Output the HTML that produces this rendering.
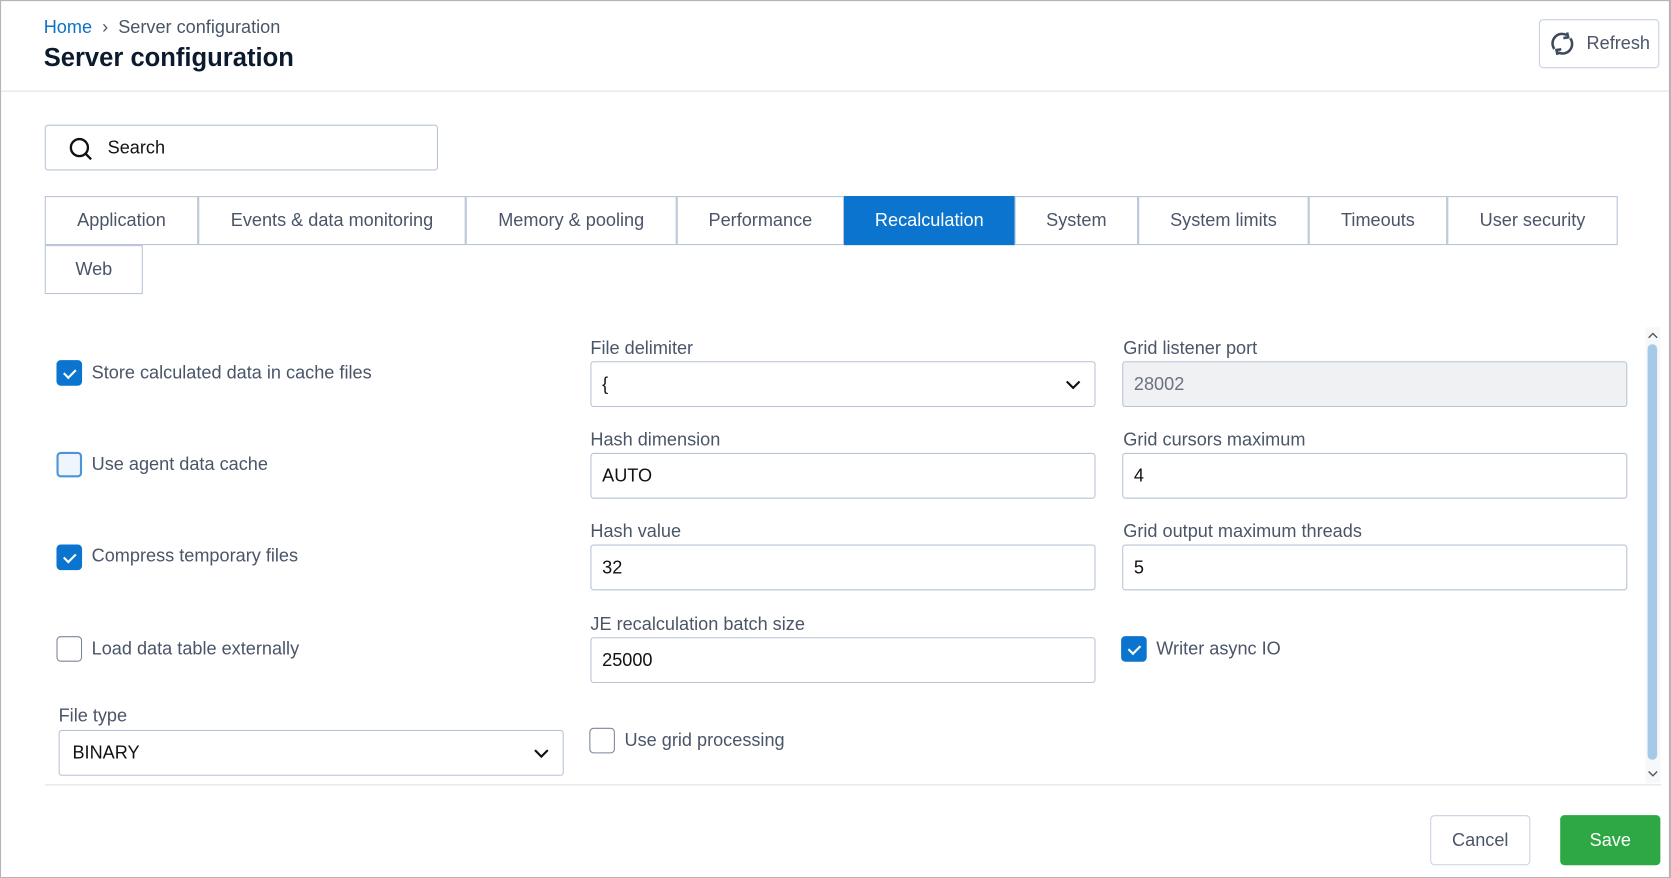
<!DOCTYPE html>
<html><head><meta charset="utf-8"><style>
*{box-sizing:border-box;margin:0;padding:0}
html,body{width:1671px;height:878px;overflow:hidden;background:#fff}
#w{position:absolute;left:0;top:0;width:1568px;height:824px;transform:scale(1.0657,1.0656);transform-origin:0 0;font-family:"Liberation Sans",sans-serif;color:#3d4a5c;font-size:17px;border:1px solid #b9b3b8;border-right-width:2px}
.a{position:absolute}
.crumb{left:40px;top:15px;font-size:17px;color:#4a5568}
.crumb span{color:#0b72c7}
h1{position:absolute;left:40px;top:40px;font-size:24px;font-weight:bold;color:#0c1a2e}
.hd{left:0;right:0;top:84px;border-top:1px solid #dde1ea}
.btn{border:1px solid #c8d2e0;border-radius:4px;background:#fff;display:flex;align-items:center;justify-content:center;font-size:17px;color:#4a5568}
.search{left:41px;top:116px;width:369px;height:43px;border:1px solid #b7c4d6;border-radius:3px;color:#111;font-size:17px}
.tab{top:183px;height:46px;border:1px solid #b7c4d6;display:flex;align-items:center;justify-content:center;color:#4a5568;font-size:17px;margin-left:-1px}
.tab.on{background:#0a74cf;border-color:#0a74cf;color:#fff}
.cb{width:24px;height:24px;border:1.5px solid #7a8699;border-radius:4px;background:#fff}
.cb.on{background:#0a74cf;border-color:#0a74cf}
.cb.on:after{content:"";position:absolute;left:8px;top:5px;width:5px;height:9px;border:solid #fff;border-width:0 2px 2px 0;transform:rotate(45deg)}
.lbl{font-size:17px;color:#4a5568}
.inp{height:43px;border:1px solid #b7c4d6;border-radius:3px;padding-left:10px;display:flex;align-items:center;color:#111;font-size:17px}
</style></head><body><div id="w">
<div class="a crumb"><span>Home</span>&nbsp;&nbsp;›&nbsp;&nbsp;Server configuration</div>
<h1>Server configuration</h1>
<div class="a btn" style="left:1443px;top:17px;width:113px;height:46px;gap:10px">
<svg width="26" height="26" viewBox="0 0 26 26" fill="none" stroke="#3d4a5c" stroke-width="2.4"><path d="M5.5 18A9 9 0 0 1 17 4.8"/><path d="M20.5 8A9 9 0 0 1 9 21.2"/><path d="M17.5 2.5l1 4.5-4.5 0.8" fill="none"/><path d="M8.5 23.5l-1-4.5 4.5-0.8" fill="none"/></svg>Refresh</div>
<div class="a hd"></div>
<div class="a search"><svg class="a" style="left:21px;top:10px" width="24" height="24" viewBox="0 0 24 24" fill="none" stroke="#111" stroke-width="2.2"><circle cx="10.5" cy="10.5" r="8"/><path d="M16.5 16.5l5 5"/></svg><span class="a" style="left:58px;top:11px">Search</span></div>
<div class="a tab" style="left:42px;width:144px">Application</div>
<div class="a tab" style="left:186px;width:251px">Events &amp; data monitoring</div>
<div class="a tab" style="left:437px;width:198px">Memory &amp; pooling</div>
<div class="a tab" style="left:635px;width:157px">Performance</div>
<div class="a tab on" style="left:792px;width:160px">Recalculation</div>
<div class="a tab" style="left:952px;width:116px">System</div>
<div class="a tab" style="left:1068px;width:160px">System limits</div>
<div class="a tab" style="left:1228px;width:130px">Timeouts</div>
<div class="a tab" style="left:1358px;width:160px">User security</div>
<div class="a tab" style="left:42px;top:229px;width:92px">Web</div>

<div class="a cb on" style="left:52px;top:337px"></div><div class="a lbl" style="left:85px;top:339px">Store calculated data in cache files</div>
<div class="a cb" style="left:52px;top:423px;border-color:#4b95d6;background:#eef5fd;border-width:2px"></div><div class="a lbl" style="left:85px;top:425px">Use agent data cache</div>
<div class="a cb on" style="left:52px;top:510px"></div><div class="a lbl" style="left:85px;top:511px">Compress temporary files</div>
<div class="a cb" style="left:52px;top:596px"></div><div class="a lbl" style="left:85px;top:598px">Load data table externally</div>
<div class="a lbl" style="left:54px;top:661px">File type</div>
<div class="a inp" style="left:54px;top:684px;width:474px;padding-left:12px">BINARY<svg class="a" style="right:12px;top:15px" width="16" height="12" viewBox="0 0 16 12" fill="none" stroke="#111" stroke-width="2"><path d="M2 3l6 6 6-6"/></svg></div>

<div class="a lbl" style="left:553px;top:316px">File delimiter</div>
<div class="a inp" style="left:553px;top:338px;width:474px">{<svg class="a" style="right:12px;top:15px" width="16" height="12" viewBox="0 0 16 12" fill="none" stroke="#111" stroke-width="2"><path d="M2 3l6 6 6-6"/></svg></div>
<div class="a lbl" style="left:553px;top:402px">Hash dimension</div>
<div class="a inp" style="left:553px;top:424px;width:474px">AUTO</div>
<div class="a lbl" style="left:553px;top:488px">Hash value</div>
<div class="a inp" style="left:553px;top:510px;width:474px">32</div>
<div class="a lbl" style="left:553px;top:575px">JE recalculation batch size</div>
<div class="a inp" style="left:553px;top:597px;width:474px">25000</div>
<div class="a cb" style="left:552px;top:682px"></div><div class="a lbl" style="left:585px;top:684px">Use grid processing</div>

<div class="a lbl" style="left:1053px;top:316px">Grid listener port</div>
<div class="a inp" style="left:1052px;top:338px;width:474px;background:#f0f1f3;color:#6b7280">28002</div>
<div class="a lbl" style="left:1053px;top:402px">Grid cursors maximum</div>
<div class="a inp" style="left:1052px;top:424px;width:474px">4</div>
<div class="a lbl" style="left:1053px;top:488px">Grid output maximum threads</div>
<div class="a inp" style="left:1052px;top:510px;width:474px">5</div>
<div class="a cb on" style="left:1051px;top:596px"></div><div class="a lbl" style="left:1084px;top:598px">Writer async IO</div>

<div class="a" style="left:1543px;top:306px;width:14px;height:428px;background:#f7f8fa"></div>
<div class="a" style="left:1545px;top:322px;width:9px;height:390px;background:#a7c9e8;border-radius:5px"></div>
<svg class="a" style="left:1544px;top:309px" width="12" height="10" viewBox="0 0 12 10" fill="none" stroke="#555" stroke-width="1.3"><path d="M2 7l4-4 4 4"/></svg>
<svg class="a" style="left:1544px;top:720px" width="12" height="10" viewBox="0 0 12 10" fill="none" stroke="#555" stroke-width="1.3"><path d="M2 3l4 4 4-4"/></svg>
<div class="a" style="left:41px;top:735px;width:1517px;border-top:1px solid #dde1ea"></div>
<div class="a btn" style="left:1341px;top:764px;width:94px;height:47px">Cancel</div>
<div class="a btn" style="left:1463px;top:764px;width:94px;height:47px;background:#2ea844;border-color:#2ea844;color:#fff">Save</div>
</div></body></html>
